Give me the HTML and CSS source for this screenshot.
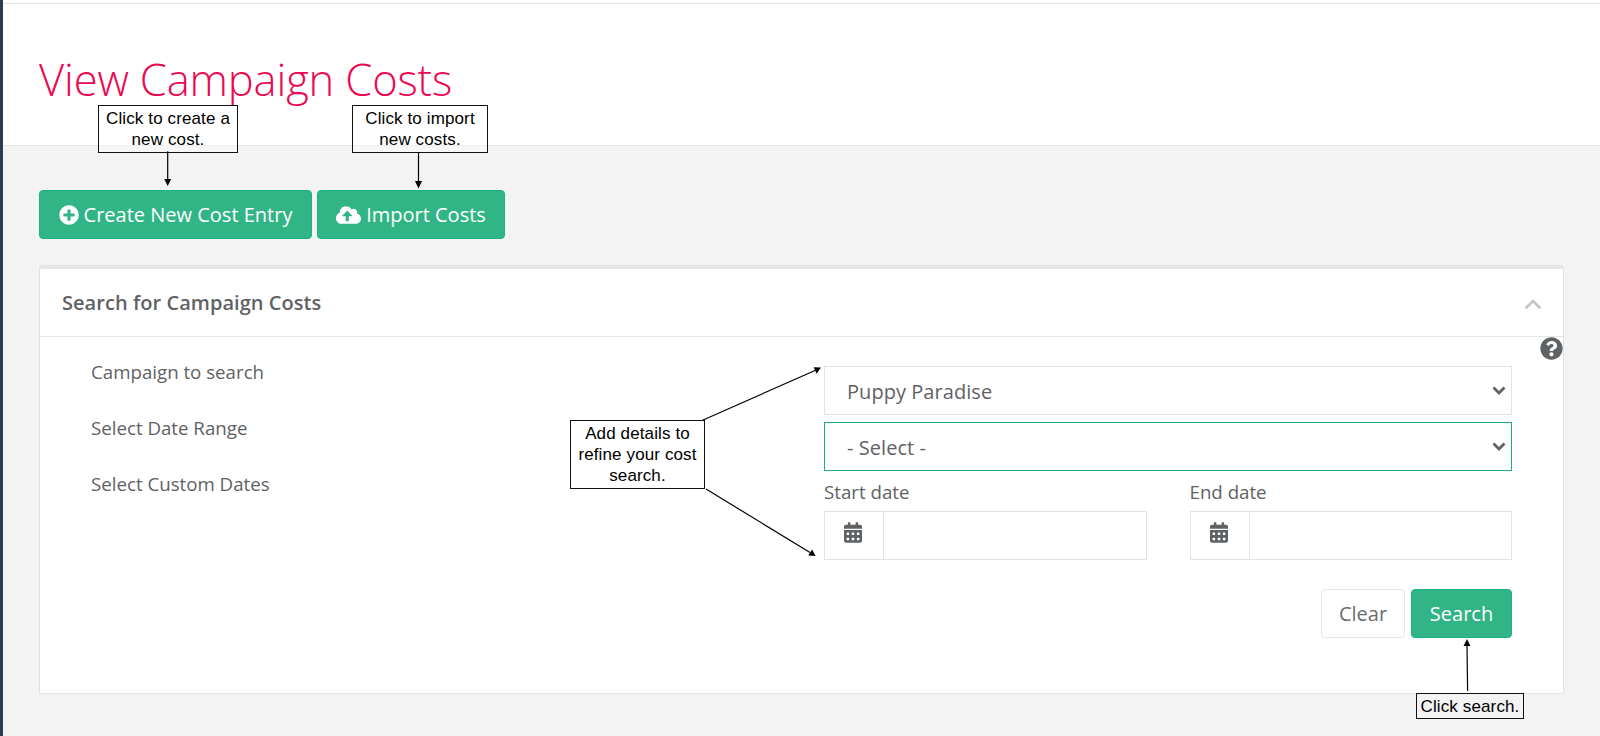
FILE: index.html
```
<!DOCTYPE html>
<html lang="en">
<head>
<meta charset="utf-8">
<title>View Campaign Costs</title>
<link rel="stylesheet" href="styles.css">
</head>
<body>
<div class="page">
  <header class="page-header"><h1 class="page-title">View Campaign Costs</h1></header>
  <main class="content">
    <div class="toolbar">
      <button class="btn btn-primary btn-create">
        <svg class="icon-plus" viewBox="0 0 512 512"><path fill="currentColor" d="M256 8C119 8 8 119 8 256s111 248 248 248 248-111 248-248S393 8 256 8zm144 276c0 6.600-5.400 12-12 12h-92v92c0 6.600-5.400 12-12 12h-56c-6.600 0-12-5.400-12-12v-92h-92c-6.600 0-12-5.400-12-12v-56c0-6.600 5.400-12 12-12h92v-92c0-6.600 5.400-12 12-12h56c6.600 0 12 5.400 12 12v92h92c6.600 0 12 5.400 12 12v56z"/></svg>
        <span class="create-text">Create New Cost Entry</span>
      </button>
      <button class="btn btn-primary btn-import">
        <svg class="icon-cloud" viewBox="0 0 640 512"><path fill="currentColor" d="M537.600 226.600c4.100-10.700 6.400-22.400 6.400-34.600 0-53-43-96-96-96-19.700 0-38.100 6-53.300 16.200C367 64.200 315.300 32 256 32c-88.400 0-160 71.600-160 160 0 2.700.1 5.400.2 8.100C40.200 219.800 0 273.200 0 336c0 79.500 64.500 144 144 144h368c70.700 0 128-57.300 128-128 0-61.900-44-113.600-102.400-125.400zM393.400 288H328v112c0 8.800-7.200 16-16 16h-48c-8.800 0-16-7.200-16-16V288h-65.400c-14.300 0-21.400-17.200-11.300-27.300l105.400-105.400c6.200-6.200 16.400-6.200 22.600 0l105.400 105.400c10.100 10.100 2.900 27.300-11.300 27.300z"/></svg>
        <span class="import-text">Import Costs</span>
      </button>
    </div>
    <section class="panel">
      <div class="panel-heading">
        <h2 class="panel-title">Search for Campaign Costs</h2>
        <svg class="icon-collapse" viewBox="0 0 16 10"><path d="M1.500 8.500 8 2l6.500 6.500"/></svg>
      </div>
      <div class="panel-body">
        <svg class="icon-help" viewBox="0 0 512 512"><path fill="currentColor" d="M504 256c0 137-111 248-248 248S8 393 8 256C8 119.100 119 8 256 8s248 111.100 248 248zM262.700 90c-54.500 0-89.300 23-116.500 63.800-3.500 5.300-2.400 12.400 2.700 16.300l34.700 26.300c5.200 3.900 12.600 3 16.700-2.100 17.900-22.700 30.100-35.800 57.300-35.800 20.400 0 45.700 13.100 45.700 33 0 15-12.400 22.700-32.500 34C247.100 238.500 216 254.900 216 296v4c0 6.600 5.400 12 12 12h56c6.600 0 12-5.400 12-12v-1.300c0-28.500 83.200-29.700 83.200-106.700 0-58-60.200-102-116.500-102zM256 338c-25.400 0-46 20.600-46 46s20.600 46 46 46 46-20.600 46-46-20.600-46-46-46z"/></svg>
        <div class="labels">
          <span>Campaign to search</span>
          <span>Select Date Range</span>
          <span>Select Custom Dates</span>
        </div>
        <div class="fields">
          <div class="select"><span>Puppy Paradise</span><svg class="icon-caret" viewBox="0 0 14 10"><path d="m1.500 1.500 5.500 5.500 5.500-5.500"/></svg></div>
          <div class="select select-focused"><span>- Select -</span><svg class="icon-caret" viewBox="0 0 14 10"><path d="m1.500 1.500 5.500 5.500 5.500-5.500"/></svg></div>
          <div class="dates">
            <div class="date">
              <span class="date-label">Start date</span>
              <div class="date-input"><div class="addon"><svg class="icon-calendar" viewBox="0 0 448 512"><path fill="currentColor" d="M0 464c0 26.500 21.500 48 48 48h352c26.500 0 48-21.500 48-48V192H0v272zm320-196c0-6.600 5.400-12 12-12h40c6.600 0 12 5.400 12 12v40c0 6.600-5.400 12-12 12h-40c-6.600 0-12-5.400-12-12v-40zm0 128c0-6.600 5.400-12 12-12h40c6.600 0 12 5.400 12 12v40c0 6.600-5.400 12-12 12h-40c-6.600 0-12-5.400-12-12v-40zM192 268c0-6.600 5.400-12 12-12h40c6.600 0 12 5.400 12 12v40c0 6.600-5.400 12-12 12h-40c-6.600 0-12-5.400-12-12v-40zm0 128c0-6.600 5.400-12 12-12h40c6.600 0 12 5.400 12 12v40c0 6.600-5.400 12-12 12h-40c-6.600 0-12-5.400-12-12v-40zM64 268c0-6.600 5.400-12 12-12h40c6.600 0 12 5.400 12 12v40c0 6.600-5.400 12-12 12H76c-6.600 0-12-5.400-12-12v-40zm0 128c0-6.600 5.400-12 12-12h40c6.600 0 12 5.400 12 12v40c0 6.600-5.400 12-12 12H76c-6.600 0-12-5.400-12-12v-40zM400 64h-48V16c0-8.800-7.200-16-16-16h-32c-8.800 0-16 7.200-16 16v48H160V16c0-8.800-7.200-16-16-16h-32c-8.800 0-16 7.200-16 16v48H48C21.500 64 0 85.500 0 112v48h448v-48c0-26.500-21.500-48-48-48z"/></svg></div></div>
            </div>
            <div class="date">
              <span class="date-label">End date</span>
              <div class="date-input"><div class="addon"><svg class="icon-calendar" viewBox="0 0 448 512"><path fill="currentColor" d="M0 464c0 26.500 21.500 48 48 48h352c26.500 0 48-21.500 48-48V192H0v272zm320-196c0-6.600 5.400-12 12-12h40c6.600 0 12 5.400 12 12v40c0 6.600-5.400 12-12 12h-40c-6.600 0-12-5.400-12-12v-40zm0 128c0-6.600 5.400-12 12-12h40c6.600 0 12 5.400 12 12v40c0 6.600-5.400 12-12 12h-40c-6.600 0-12-5.400-12-12v-40zM192 268c0-6.600 5.400-12 12-12h40c6.600 0 12 5.400 12 12v40c0 6.600-5.400 12-12 12h-40c-6.600 0-12-5.400-12-12v-40zm0 128c0-6.600 5.400-12 12-12h40c6.600 0 12 5.400 12 12v40c0 6.600-5.400 12-12 12h-40c-6.600 0-12-5.400-12-12v-40zM64 268c0-6.600 5.400-12 12-12h40c6.600 0 12 5.400 12 12v40c0 6.600-5.400 12-12 12H76c-6.600 0-12-5.400-12-12v-40zm0 128c0-6.600 5.400-12 12-12h40c6.600 0 12 5.400 12 12v40c0 6.600-5.400 12-12 12H76c-6.600 0-12-5.400-12-12v-40zM400 64h-48V16c0-8.800-7.200-16-16-16h-32c-8.800 0-16 7.200-16 16v48H160V16c0-8.800-7.200-16-16-16h-32c-8.800 0-16 7.200-16 16v48H48C21.500 64 0 85.500 0 112v48h448v-48c0-26.500-21.500-48-48-48z"/></svg></div></div>
            </div>
          </div>
          <div class="actions">
            <button class="btn btn-clear">Clear</button>
            <button class="btn btn-primary btn-search">Search</button>
          </div>
        </div>
      </div>
    </section>
  </main>
</div>
<svg class="arrows" viewBox="0 0 1600 736">
  <g stroke="#000" stroke-width="1.200">
    <path d="M167.700 151V181M418.500 152V183M702 420.500 815 370.500M706 489 810 552.500M1467.600 691 1467 645"/>
  </g>
  <path d="M164.200 179h7l-3.500 7zM415 181h7l-3.500 7.500zM821 367.500l-7.300-.2 2.900 6.400zM815.500 556l-3.300-6.500-4 6zM1467 639l-3.500 7h7z"/>
</svg>
<div class="callout callout-create">Click to create a<br>new cost.</div>
<div class="callout callout-import">Click to import<br>new costs.</div>
<div class="callout callout-refine">Add details to<br>refine your cost<br>search.</div>
<div class="callout callout-search">Click search.</div>
</body>
</html>
```
FILE: styles.css
```
* { box-sizing: border-box; }
body { margin: 0; background: #f3f3f3; color: #5f6265; font-family: "Open Sans", sans-serif; }
svg { display: block; flex: none; }
.page { height: 736px; overflow: hidden; border-left: 3px solid #2d3c50; }
.page-header { height: 146px; padding: 50px 0 0 36px; background: #fff; border-bottom: 1px solid #e3e6ea; box-shadow: inset 0 3px #fff, inset 0 4px #e4e6e8; }
.page-title { margin: 0; font-size: 43.500px; line-height: 60px; font-weight: 300; letter-spacing: -.15px; color: #ec0850; white-space: nowrap; }
.content { padding: 44px 36px 0; }
.toolbar { display: flex; gap: 5px; }
.btn { display: flex; align-items: center; justify-content: center; height: 49px; padding: 0; border-radius: 4px; font: 400 20px/28px "Open Sans", sans-serif; white-space: nowrap; }
.btn-primary { color: #fff; background: #32b586; border: 1px solid #1db283; font-weight: 450; }
.btn-create { width: 273px; gap: 5px; }
.btn-import { width: 188px; gap: 5px; }
.icon-plus { width: 20px; height: 20px; }
.icon-cloud { width: 25px; height: 20px; }
.panel { height: 429px; margin-top: 26px; background: #fff; border: 1px solid #dfe1e2; border-top: 4px solid #e3e5e6; border-bottom-color: #e6e6e6; border-radius: 4px 4px 2px 2px; }
.panel-heading { display: flex; align-items: center; justify-content: space-between; height: 68px; padding: 0 22px; border-bottom: 1px solid #e3e8eb; }
.panel-title { margin: 0; font-size: 20px; line-height: 28px; font-weight: 600; letter-spacing: .05px; white-space: nowrap; }
.icon-collapse { width: 16px; height: 10px; margin-top: 3px; fill: none; stroke: #c3c4c5; stroke-width: 2.600; stroke-linecap: round; }
.panel-body { position: relative; display: flex; justify-content: space-between; padding: 29px 51px 0; }
.icon-help { position: absolute; top: 0; right: 0; width: 23px; height: 23px; }
.labels { display: flex; flex-direction: column; gap: 28px; margin-top: -8px; font-size: 18.700px; line-height: 28px; white-space: nowrap; }
.fields { width: 688px; }
.select { display: flex; align-items: center; justify-content: space-between; height: 49px; margin-bottom: 7px; padding: 0 5px 0 22px; border: 1px solid #e2e3e4; font-size: 20px; line-height: 28px; }
.select span { margin-top: 2px; letter-spacing: .05px; }
.select-focused { border-color: #1ead85; }
.icon-caret { width: 14px; height: 10px; fill: none; stroke: #5f6265; stroke-width: 2.800; }
.dates { display: flex; gap: 43px; }
.date { flex: 1; }
.date-label { display: block; height: 33px; font-size: 18.700px; line-height: 27px; }
.date-input { display: flex; height: 49px; border: 1px solid #e2e3e4; }
.addon { width: 59px; padding: 10px 0 0 19px; border-right: 1px solid #e2e3e4; }
.icon-calendar { width: 18px; height: 21px; }
.actions { display: flex; justify-content: flex-end; gap: 6px; margin-top: 29px; }
.btn-clear { width: 84px; color: #6a6c6e; background: #fff; border: 1px solid #e5e6e8; }
.btn-search { width: 101px; }
.arrows { position: absolute; left: 0; top: 0; width: 1600px; height: 736px; }
.callout { position: absolute; border: 1px solid #111; color: #000; font: 17px/21px "Liberation Sans", Arial, sans-serif; letter-spacing: .12px; text-align: center; white-space: nowrap; }
.callout-create { left: 98px; top: 105px; width: 140px; height: 48px; padding-top: 2px; background: rgba(255,255,255,.35); }
.callout-import { left: 352px; top: 105px; width: 136px; height: 48px; padding-top: 2px; background: rgba(255,255,255,.35); }
.callout-refine { left: 570px; top: 420px; width: 135px; height: 69px; padding-top: 2px; }
.callout-search { left: 1416px; top: 693px; width: 108px; height: 26px; padding-top: 2px; }
```
